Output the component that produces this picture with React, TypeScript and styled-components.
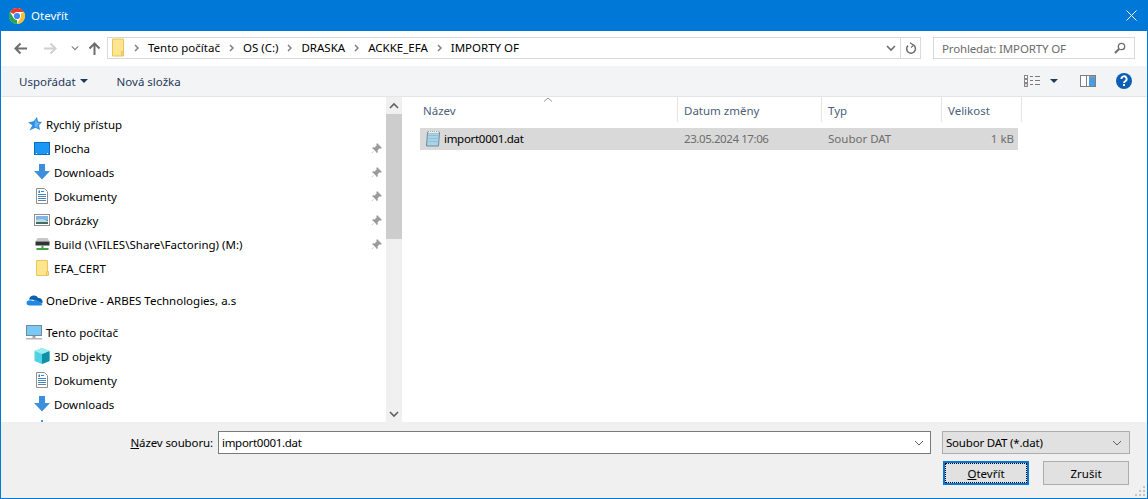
import React, { FunctionComponent } from 'react'
import styled, { createGlobalStyle } from 'styled-components'

const BLUE = '#0078d7'
const FONT = `'Noto Sans', 'Open Sans', sans-serif`

const GlobalStyle = createGlobalStyle`
  html, body { margin: 0; padding: 0; background: #fff; }
  * { box-sizing: border-box; }
`

const Dialog = styled.div`
  width: 1148px;
  height: 499px;
  display: grid;
  grid-template-columns: minmax(0, 1fr);
  grid-template-rows: 31px 35px 31px 1fr 76px;
  border: 1px solid ${BLUE};
  border-top: 0;
  background: #fff;
  font-family: ${FONT};
  font-size: 11.5px;
  color: #000;
  overflow: hidden;
`

const TitleBar = styled.div`
  background: ${BLUE};
  color: #fff;
  display: flex;
  align-items: center;
  padding: 0 11px 0 9px;
  gap: 6px;
  margin: 0 -1px;
`

const TitleText = styled.span`
  flex: 1;
  font-size: 11.5px;
`

const NavBar = styled.div`
  display: flex;
  align-items: center;
  padding: 0 12px 1px 0;
`

const NavButtons = styled.div`
  width: 106px;
  display: flex;
  align-items: center;
  padding-left: 13px;
`

const NavSlot = styled.div<{ w: number }>`
  width: ${(p) => p.w}px;
  display: flex;
  justify-content: flex-start;
`

const AddressBox = styled.div`
  width: 814px;
  height: 22px;
  border: 1px solid #d9d9d9;
  display: flex;
  align-items: center;
  padding-left: 3px;
`

const Crumbs = styled.div`
  flex: 1;
  display: flex;
  align-items: center;
  gap: 9px;
  padding-bottom: 1px;
`

const AddressTools = styled.div`
  display: flex;
  align-items: center;
  height: 100%;
`

const DropSlot = styled.div`
  width: 22px;
  height: 100%;
  display: flex;
  align-items: center;
  justify-content: center;
  padding-left: 4px;
`

const RefreshSlot = styled.div`
  width: 20px;
  height: 100%;
  border-left: 1px solid #d9d9d9;
  display: flex;
  align-items: center;
  justify-content: center;
`

const SearchBox = styled.div`
  width: 202px;
  height: 22px;
  margin-left: 12px;
  border: 1px solid #d9d9d9;
  display: flex;
  align-items: center;
  justify-content: space-between;
  padding: 0 8px;
  color: #6d6d6d;
  letter-spacing: -0.15px;
`

const Toolbar = styled.div`
  background: #f3f4f6;
  border-bottom: 1px solid #e6e6e6;
  display: flex;
  align-items: center;
  padding: 0 15px 0 18px;
  color: #1e395b;
`

const ToolButton = styled.div`
  display: flex;
  align-items: center;
  gap: 4px;
  margin-right: 29px;
`

const ToolSpacer = styled.div`
  flex: 1;
`

const ToolIcons = styled.div`
  display: flex;
  align-items: center;
`

const ToolIcon = styled.div<{ gap?: number }>`
  display: flex;
  align-items: center;
  margin-left: ${(p) => p.gap ?? 0}px;
`

const Body = styled.div`
  display: flex;
  min-height: 0;
  overflow: hidden;
`

const Sidebar = styled.div`
  width: 385px;
  padding-top: 15px;
  overflow: hidden;
`

const NavGroup = styled.div`
  margin-bottom: 8px;
`

const NavRow = styled.div<{ head?: boolean }>`
  height: 24px;
  display: flex;
  align-items: center;
  padding-left: ${(p) => (p.head ? 24 : 32)}px;
  padding-right: 4px;
  gap: 3px;
`

const NavIcon = styled.div`
  width: 18px;
  height: 18px;
  display: flex;
  align-items: center;
  justify-content: center;
`

const NavLabel = styled.span`
  flex: 1;
  white-space: nowrap;
`

const ScrollTrack = styled.div`
  width: 16px;
  background: #f0f0f0;
  display: flex;
  flex-direction: column;
  align-items: stretch;
`

const ScrollButton = styled.div`
  height: 17px;
  display: flex;
  align-items: center;
  justify-content: center;
  flex-shrink: 0;
`

const ScrollThumb = styled.div`
  height: 125px;
  background: #cdcdcd;
`

const ScrollGap = styled.div`
  flex: 1;
`

const Files = styled.div`
  flex: 1;
  padding-left: 18px;
  position: relative;
`

const HeaderRow = styled.div`
  display: grid;
  grid-template-columns: 258px 144px 120px 80px;
  height: 25px;
  color: #4c607a;
`

const HeaderCell = styled.div<{ first?: boolean }>`
  border-right: 1px solid #e5e5e5;
  padding: 1px 0 0 ${(p) => (p.first ? 3 : 6)}px;
  display: flex;
  align-items: center;
`

const SortMark = styled.div`
  position: absolute;
  left: 141px;
  top: 0;
  line-height: 0;
`

const FileRow = styled.div`
  display: grid;
  grid-template-columns: 258px 144px 120px 76px;
  height: 22px;
  margin-top: 6px;
  width: 598px;
  background: #d9d9d9;
  align-items: center;
  color: #6d6d6d;
  padding-bottom: 1px;
`

const FileName = styled.div`
  display: flex;
  align-items: center;
  gap: 3px;
  padding-left: 5px;
  color: #000;
  letter-spacing: -0.3px;
`

const FileCell = styled.div<{ right?: boolean; tight?: boolean }>`
  padding: ${(p) => (p.right ? '0 4px 0 0' : '0 0 0 6px')};
  text-align: ${(p) => (p.right ? 'right' : 'left')};
  letter-spacing: ${(p) => (p.tight ? '-0.42px' : '0')};
`

const Footer = styled.div`
  background: #f0f0f0;
  padding: 9px 17px 0 0;
  position: relative;
  display: flex;
  flex-direction: column;
`

const FooterTop = styled.div`
  display: flex;
  align-items: center;
  height: 23px;
`

const FieldLabel = styled.label`
  width: 212px;
  text-align: right;
  letter-spacing: -0.12px;
`

const FileInput = styled.div`
  width: 713px;
  height: 23px;
  margin-left: 5px;
  background: #fff;
  border: 1px solid #7a7a7a;
  display: flex;
  align-items: center;
  justify-content: space-between;
  padding: 0 6px 0 3px;
  letter-spacing: -0.3px;
`

const TypeSelect = styled.div`
  width: 188px;
  height: 23px;
  margin-left: 11px;
  background: #e1e1e1;
  border: 1px solid #adadad;
  display: flex;
  align-items: center;
  justify-content: space-between;
  padding: 0 7px 0 3px;
  letter-spacing: -0.2px;
`

const FooterButtons = styled.div`
  display: flex;
  justify-content: flex-end;
  gap: 14px;
  margin-top: 7px;
  padding-right: 1px;
`

const DialogButton = styled.div<{ primary?: boolean }>`
  width: 86px;
  height: 24px;
  background: #e1e1e1;
  border: ${(p) => (p.primary ? `2px solid ${BLUE}` : '1px solid #adadad')};
  display: flex;
  align-items: center;
  justify-content: center;
  position: relative;
  ${(p) =>
    p.primary
      ? `&::after {
          content: '';
          position: absolute;
          inset: 0;
          border: 1px dotted #000;
        }`
      : ''}
`

const Grip = styled.div`
  position: absolute;
  right: 1px;
  bottom: 1px;
  line-height: 0;
`

const Chrome = () => (
  <svg width="16" height="16" viewBox="0 0 16 16">
    <circle cx="8" cy="8" r="7.900" fill="#fff" />
    <path d="M1.070 4A8 8 0 0 1 14.930 4H8A4 4 0 0 0 4.540 6z" fill="#e33b2e" />
    <path d="M14.930 4A8 8 0 0 1 8 16L11.460 10A4 4 0 0 0 11.460 6z" fill="#fbc02d" />
    <path d="M8 16A8 8 0 0 1 1.070 4L4.540 10A4 4 0 0 0 8 12z" fill="#2fa44f" />
    <circle cx="8" cy="8" r="3.100" fill="#4285f4" />
  </svg>
)

const CloseX = () => (
  <svg width="11" height="11" viewBox="0 0 11 11" stroke="#fff" strokeWidth="1" fill="none">
    <path d="M.5.5l10 10M10.500.5l-10 10" />
  </svg>
)

const Arrow: FunctionComponent<{ dir: 'left' | 'right' | 'up'; color: string }> = ({ dir, color }) => {
  const rotate = dir === 'left' ? 0 : dir === 'right' ? 180 : 90
  return (
    <svg width="13" height="13" viewBox="0 0 13 13" fill="none" stroke={color} strokeWidth="2" transform={`rotate(${rotate})`}>
      <path d="M13 6.500H1.500M6.500 1.500l-5 5 5 5" />
    </svg>
  )
}

const Chevron: FunctionComponent<{ color?: string; width?: number; size?: number }> = ({ color = '#808080', width = 1.4, size = 10 }) => (
  <svg width={size} height={size} viewBox="0 0 10 10" fill="none" stroke={color} strokeWidth={width}>
    <path d="M1 3l4 4 4-4" />
  </svg>
)

const ChevronUp = () => (
  <svg width="10" height="10" viewBox="0 0 10 10" fill="none" stroke="#606060" strokeWidth="1.600">
    <path d="M1 7l4-4 4 4" />
  </svg>
)

const CrumbSep = () => (
  <svg width="5" height="8" viewBox="0 0 5 8" fill="none" stroke="#808080" strokeWidth="1.500">
    <path d="M1 1l3 3-3 3" />
  </svg>
)

const Refresh = () => (
  <svg width="12" height="13" viewBox="0 0 12 13" fill="none" stroke="#6d6d6d" strokeWidth="1.500">
    <path d="M8.600 3.200A4.400 4.400 0 1 1 3 3.600" />
    <path d="M5 .8l3.600 2.400L6 5.600" strokeWidth="1.200" />
  </svg>
)

const SearchIcon = () => (
  <svg width="12" height="12" viewBox="0 0 12 12" fill="none" stroke="#6d6d6d">
    <circle cx="7.500" cy="4.500" r="3.200" strokeWidth="1.300" />
    <path d="M5 7l-4 4" strokeWidth="2" />
  </svg>
)

const Caret: FunctionComponent<{ color?: string }> = ({ color = '#1e395b' }) => (
  <svg width="8" height="4" viewBox="0 0 8 4">
    <path d="M0 0h8L4 4z" fill={color} />
  </svg>
)

const ViewIcon = () => (
  <svg width="17" height="13" viewBox="0 0 17 13" fill="none">
    <rect x="0.5" y="0.5" width="3" height="3" stroke="#8a8a8a" fill="#fff" />
    <rect x="0.5" y="4.500" width="3" height="3" stroke="#8a8a8a" fill="#fff" />
    <rect x="0.5" y="8.500" width="3" height="3" stroke="#8a8a8a" fill="#fff" />
    <rect x="1.500" y="9.500" width="1" height="1" fill="#c0392b" />
    <path d="M6 1.500h3M11 1.500h5M6 5.500h3M11 5.500h5M6 9.500h3M11 9.500h5" stroke="#7a7a7a" />
  </svg>
)

const PreviewIcon = () => (
  <svg width="16" height="12" viewBox="0 0 16 12">
    <rect x="0.5" y="0.5" width="15" height="11" fill="#fff" stroke="#7d7d7d" />
    <rect x="6" y="1" width="1" height="10" fill="#7d7d7d" />
    <rect x="9" y="1" width="6" height="10" fill="#4a9ae6" />
    <rect x="9" y="1" width="6" height="1.400" fill="#9a9a9a" />
  </svg>
)

const HelpIcon = () => (
  <svg width="16" height="16" viewBox="0 0 16 16">
    <circle cx="8" cy="8" r="8" fill="#0a5fb4" />
    <path d="M5.400 6a2.600 2.600 0 1 1 3.900 2.200C8.500 8.700 8 9 8 10" fill="none" stroke="#fff" strokeWidth="1.900" />
    <rect x="7" y="11" width="2" height="2" fill="#fff" />
  </svg>
)

const FolderIcon = () => (
  <svg width="14" height="19" viewBox="0 0 14 19">
    <path d="M1.500 1h11v17h-11z" fill="#fde68f" stroke="#e8c55a" />
    <path d="M10.500 13.500h2v4h-2z" fill="#fbd873" stroke="#e8c55a" />
  </svg>
)

const StarIcon = () => (
  <svg width="16" height="16" viewBox="0 0 16 16">
    <path d="M11 1l1 4.500 4 .5-3 3.200 1 4.800-4.500-2.300L3.500 14.500 6.300 9.200 2 6.500 7.500 5.300z" fill="#2f8fe4" />
    <path d="M9.500 3 11 6.500l3 .4-2.500 2.300.6 2.800-3.600-2z" fill="#6cb6f2" />
  </svg>
)

const DesktopIcon = () => (
  <svg width="16" height="13" viewBox="0 0 16 13">
    <rect x="0.5" y="0.5" width="15" height="12" fill="#1e96f3" stroke="#0a6cc4" />
    <path d="M2 11.500h1M13 11.500h1" stroke="#fff" />
  </svg>
)

const DownloadIcon = () => (
  <svg width="16" height="16" viewBox="0 0 16 16">
    <path d="M5 0h6v7h5l-8 8.500L0 7h5z" fill="#3d8fdc" />
  </svg>
)

const DocIcon = () => (
  <svg width="12" height="16" viewBox="0 0 12 16">
    <path d="M.5.5h8l3 3v12H.5z" fill="#fff" stroke="#8f8f8f" />
    <path d="M5 3.500h3M2 6.500h8M2 10.500h8" stroke="#2f86d6" />
    <path d="M2 8.500h8M2 12.500h8" stroke="#6f7f8c" />
    <path d="M2.500 2.500H4v2.500H2.500z" fill="#2f86d6" />
  </svg>
)

const PictureIcon = () => (
  <svg width="16" height="12" viewBox="0 0 16 12">
    <rect x="0.5" y="0.5" width="15" height="11" fill="#fff" stroke="#8f8f8f" />
    <rect x="2" y="2" width="12" height="4" fill="#7db7e8" />
    <path d="M2 6h12v4H2z" fill="#3e6f63" />
    <path d="M2 6c4-1.500 8-1 12 1v1H2z" fill="#c8d8e0" />
  </svg>
)

const DriveIcon = () => (
  <svg width="15" height="14" viewBox="0 0 15 14">
    <path d="M2.500 1h10l2 3.500H.5z" fill="#c7c7c7" />
    <rect x="0.5" y="4.500" width="14" height="4" fill="#333" />
    <rect x="6.500" y="8.500" width="2" height="2.500" fill="#43a047" />
    <rect x="1.500" y="11" width="12" height="2" fill="#43a047" />
  </svg>
)

const CloudIcon = () => (
  <svg width="17" height="12" viewBox="0 0 17 12">
    <path d="M3 5.500A5 5 0 0 1 12.200 4 3.600 3.600 0 0 1 16.500 8c0 .6 0 1-.4 1.600L9 6z" fill="#0d5fb0" />
    <path d="M3.500 11.500h11c1 0 1.600-.8 1.800-1.600L10 5.500 7 7C5 5.800 2.500 6 1.300 7c-1.400 1.800-.8 4.500 2.200 4.500z" fill="#1e88e5" />
  </svg>
)

const PcIcon = () => (
  <svg width="16" height="15" viewBox="0 0 16 15">
    <rect x="0.5" y="0.5" width="15" height="10" fill="#7cc8f5" stroke="#6f8a9c" />
    <rect x="6.500" y="11" width="3" height="2" fill="#a3a3a3" />
    <rect x="0" y="13" width="16" height="1.500" fill="#b5b5b5" />
  </svg>
)

const CubeIcon = () => (
  <svg width="16" height="16" viewBox="0 0 16 16">
    <path d="M8 0l7.500 3v10L8 16 .5 13V3z" fill="#4fd2e2" />
    <path d="M8 6l7.500-3v10L8 16z" fill="#0f8fa8" />
    <path d="M8 0l7.500 3L8 6 .5 3z" fill="#9bedf2" />
  </svg>
)

const MusicIcon = () => (
  <svg width="16" height="16" viewBox="0 0 16 16">
    <path d="M7 0h2v12H7z" fill="#3f9be8" />
    <circle cx="6" cy="12" r="3" fill="#3f9be8" />
  </svg>
)

const SmallFolder = () => (
  <svg width="13" height="16" viewBox="0 0 13 16">
    <path d="M.5.5h11v15H.5z" fill="#fde68f" stroke="#e8c55a" />
    <path d="M10.500 11.500h2v4h-2z" fill="#fbd873" stroke="#e8c55a" />
  </svg>
)

const PinIcon = () => (
  <svg width="11" height="11" viewBox="0 0 10 10">
    <path d="M5.500 0 10 4.500 8.800 5.200 7.800 4.800 6 6.800 6.200 8.500 5.200 9 3.400 6.600 1 9.400.6 9 3.400 6.600 1 4.800 1.600 3.800 3.200 4 5.200 2.200 4.800 1.200z" fill="#9a9a9a" />
  </svg>
)

const NotepadIcon = () => (
  <svg width="16" height="17" viewBox="0 0 16 17">
    <path d="M2.500 2.500h12l-1 13.500H1.500z" fill="#a9d3e6" stroke="#6f8a9c" />
    <path d="M3 5.500h10.500M2.800 8.500h10.400M2.600 11.500h10.400" stroke="#8fc0d8" />
    <path d="M3 1.500h11V3H3z" fill="#fff" stroke="#777" strokeWidth=".6" strokeDasharray="1 1" />
  </svg>
)

const GripIcon = () => (
  <svg width="12" height="12" viewBox="0 0 12 12" fill="#c4c4c4">
    <rect x="9" y="1" width="2" height="2" />
    <rect x="5" y="5" width="2" height="2" />
    <rect x="9" y="5" width="2" height="2" />
    <rect x="1" y="9" width="2" height="2" />
    <rect x="5" y="9" width="2" height="2" />
    <rect x="9" y="9" width="2" height="2" />
  </svg>
)

const crumbs = ['Tento počítač', 'OS (C:)', 'DRASKA', 'ACKKE_EFA', 'IMPORTY OF']

const quickItems = [
  { label: 'Plocha', icon: <DesktopIcon /> },
  { label: 'Downloads', icon: <DownloadIcon /> },
  { label: 'Dokumenty', icon: <DocIcon /> },
  { label: 'Obrázky', icon: <PictureIcon /> },
  { label: 'Build (\\\\FILES\\Share\\Factoring) (M:)', icon: <DriveIcon /> },
]

export default function App() {
  return (
    <>
      <GlobalStyle />
      <Dialog>
        <TitleBar>
          <Chrome />
          <TitleText>Otevřít</TitleText>
          <CloseX />
        </TitleBar>

        <NavBar>
          <NavButtons>
            <NavSlot w={30}><Arrow dir="left" color="#6d6d6d" /></NavSlot>
            <NavSlot w={27}><Arrow dir="right" color="#d0d0d0" /></NavSlot>
            <NavSlot w={17}><Chevron size={8} /></NavSlot>
            <NavSlot w={19}><Arrow dir="up" color="#6d6d6d" /></NavSlot>
          </NavButtons>
          <AddressBox>
            <Crumbs>
              <FolderIcon />
              <CrumbSep />
              {crumbs.map((c, i) => (
                <React.Fragment key={c}>
                  <span>{c}</span>
                  {i < crumbs.length - 1 && <CrumbSep />}
                </React.Fragment>
              ))}
            </Crumbs>
            <AddressTools>
              <DropSlot><Chevron color="#6d6d6d" width={1.6} /></DropSlot>
              <RefreshSlot><Refresh /></RefreshSlot>
            </AddressTools>
          </AddressBox>
          <SearchBox>
            <span>Prohledat: IMPORTY OF</span>
            <SearchIcon />
          </SearchBox>
        </NavBar>

        <Toolbar>
          <ToolButton>Uspořádat <Caret /></ToolButton>
          <ToolButton>Nová složka</ToolButton>
          <ToolSpacer />
          <ToolIcons>
            <ToolIcon><ViewIcon /></ToolIcon>
            <ToolIcon gap={9}><Caret /></ToolIcon>
            <ToolIcon gap={22}><PreviewIcon /></ToolIcon>
            <ToolIcon gap={20}><HelpIcon /></ToolIcon>
          </ToolIcons>
        </Toolbar>

        <Body>
          <Sidebar>
            <NavGroup>
              <NavRow head>
                <NavIcon><StarIcon /></NavIcon>
                <NavLabel>Rychlý přístup</NavLabel>
              </NavRow>
              {quickItems.map((item) => (
                <NavRow key={item.label}>
                  <NavIcon>{item.icon}</NavIcon>
                  <NavLabel>{item.label}</NavLabel>
                  <PinIcon />
                </NavRow>
              ))}
              <NavRow>
                <NavIcon><SmallFolder /></NavIcon>
                <NavLabel>EFA_CERT</NavLabel>
              </NavRow>
            </NavGroup>
            <NavGroup>
              <NavRow head>
                <NavIcon><CloudIcon /></NavIcon>
                <NavLabel>OneDrive - ARBES Technologies, a.s</NavLabel>
              </NavRow>
            </NavGroup>
            <NavGroup>
              <NavRow head>
                <NavIcon><PcIcon /></NavIcon>
                <NavLabel>Tento počítač</NavLabel>
              </NavRow>
              <NavRow>
                <NavIcon><CubeIcon /></NavIcon>
                <NavLabel>3D objekty</NavLabel>
              </NavRow>
              <NavRow>
                <NavIcon><DocIcon /></NavIcon>
                <NavLabel>Dokumenty</NavLabel>
              </NavRow>
              <NavRow>
                <NavIcon><DownloadIcon /></NavIcon>
                <NavLabel>Downloads</NavLabel>
              </NavRow>
              <NavRow>
                <NavIcon><MusicIcon /></NavIcon>
              </NavRow>
            </NavGroup>
          </Sidebar>

          <ScrollTrack>
            <ScrollButton><ChevronUp /></ScrollButton>
            <ScrollThumb />
            <ScrollGap />
            <ScrollButton><Chevron color="#606060" width={1.6} /></ScrollButton>
          </ScrollTrack>

          <Files>
            <SortMark>
              <svg width="10" height="5" viewBox="0 0 10 5" fill="none" stroke="#9a9a9a">
                <path d="M1 4.500 5 1l4 3.500" />
              </svg>
            </SortMark>
            <HeaderRow>
              <HeaderCell first>Název</HeaderCell>
              <HeaderCell>Datum změny</HeaderCell>
              <HeaderCell>Typ</HeaderCell>
              <HeaderCell>Velikost</HeaderCell>
            </HeaderRow>
            <FileRow>
              <FileName><NotepadIcon /> import0001.dat</FileName>
              <FileCell tight>23.05.2024 17:06</FileCell>
              <FileCell>Soubor DAT</FileCell>
              <FileCell right>1 kB</FileCell>
            </FileRow>
          </Files>
        </Body>

        <Footer>
          <FooterTop>
            <FieldLabel><u>N</u>ázev souboru:</FieldLabel>
            <FileInput>
              <span>import0001.dat</span>
              <Chevron color="#606060" width={1} />
            </FileInput>
            <TypeSelect>
              <span>Soubor DAT (*.dat)</span>
              <Chevron color="#606060" width={1} />
            </TypeSelect>
          </FooterTop>
          <FooterButtons>
            <DialogButton primary><span><u>O</u>tevřít</span></DialogButton>
            <DialogButton>Zrušit</DialogButton>
          </FooterButtons>
          <Grip><GripIcon /></Grip>
        </Footer>
      </Dialog>
    </>
  )
}
